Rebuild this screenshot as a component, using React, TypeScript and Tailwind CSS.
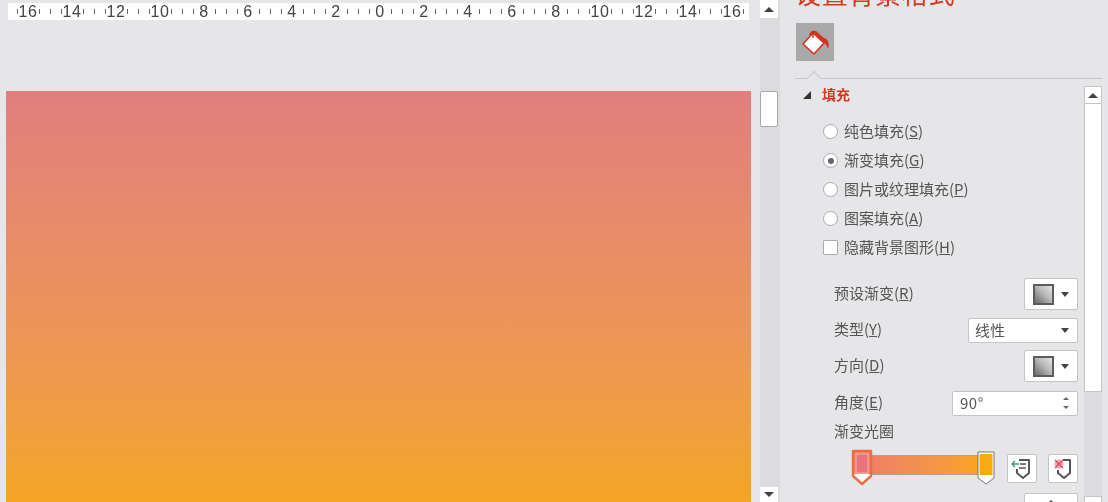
const rulerLabels = [16, 14, 12, 10, 8, 6, 4, 2, 0, 2, 4, 6, 8, 10, 12, 14, 16];

function Tick() {
  return (
    <span className="w-[11px] shrink-0 flex justify-center">
      <span className="w-px h-[5px] bg-[#666]" />
    </span>
  );
}

function Ruler() {
  return (
    <div className="h-[17px] w-[741px] ml-2 mt-[3px] bg-white flex items-center pl-[3.5px] shrink-0">
      <Tick />
      {rulerLabels.map((n, i) => (
        <div key={i} className="flex items-center shrink-0 w-[44px] last:w-[22px]">
          <span className="w-[24px] -mx-[6.5px] shrink-0 flex justify-center text-[16px] leading-none text-[#444] font-['Liberation_Sans',sans-serif] tracking-[0.5px]">
            {n}
          </span>
          <Tick />
          {i < rulerLabels.length - 1 && <Tick />}
          {i < rulerLabels.length - 1 && <Tick />}
        </div>
      ))}
    </div>
  );
}

function ArrowUp() {
  return <div className="w-0 h-0 border-x-[5px] border-x-transparent border-b-[5px] border-b-[#444]" />;
}

function ArrowDown() {
  return <div className="w-0 h-0 border-x-[5px] border-x-transparent border-t-[5px] border-t-[#444]" />;
}

function MainScrollbar() {
  return (
    <div className="w-5 shrink-0 h-full bg-[#dcdcde] flex flex-col justify-between">
      <div className="flex flex-col">
        <div className="w-[18px] h-[18px] bg-white flex items-center justify-center">
          <ArrowUp />
        </div>
        <div className="w-[18px] h-9 mt-[73px] bg-white border border-[#a8a8a8] rounded-[2px]" />
      </div>
      <div className="w-[18px] h-[15px] bg-white flex items-center justify-center">
        <ArrowDown />
      </div>
    </div>
  );
}

function BucketIcon() {
  return (
    <svg width="30" height="30" viewBox="0 0 30 30">
      <path d="M9 8 C10 4 13 3 16 4 L24 11 C28 12 30 16 28 22 C27 18 25 16 22 15 Z" fill="#d5331f" />
      <path d="M13 6 L24 16 L14 27 L3 17 Z" fill="#fff" stroke="#d5331f" strokeWidth="1.6" strokeLinejoin="round" />
      <path d="M13 4 V11" stroke="#b92a18" strokeWidth="1.3" />
    </svg>
  );
}

function OptionText({ label, mark }: { label: string; mark: string }) {
  return (
    <span className="mb-[3px] text-[15px] leading-none text-[#555] whitespace-nowrap">
      {label}(<span className="underline">{mark}</span>)
    </span>
  );
}

function Radio({ label, mark, checked }: { label: string; mark: string; checked?: boolean }) {
  return (
    <div className="h-[29px] flex items-center gap-[6px]">
      <span className="w-[15px] h-[15px] rounded-full bg-white border border-[#a9a9a9] flex items-center justify-center shrink-0">
        {checked && <span className="w-[6px] h-[6px] rounded-full bg-[#666]" />}
      </span>
      <OptionText label={label} mark={mark} />
    </div>
  );
}

function SwatchButton() {
  return (
    <div className="w-[54px] h-[32px] bg-white border border-[#c4c4c4] rounded-[2px] flex items-center justify-center gap-[7px]">
      <span className="w-[21px] h-[21px] border-2 border-[#5c5c5c] bg-gradient-to-tr from-[#6a6a6a] via-[#b4b4b4] to-[#e4e4e4]" />
      <span className="w-0 h-0 border-x-[4px] border-x-transparent border-t-[5px] border-t-[#444]" />
    </div>
  );
}

function FormRow({ children, height }: { children: React.ReactNode; height: string }) {
  return <div className={`${height} flex items-center justify-between`}>{children}</div>;
}

function ActiveStop() {
  return (
    <svg width="22" height="37" viewBox="0 0 22 37" className="shrink-0 z-10 mt-[3px]">
      <path d="M2 2 H20 V27 L11 35 L2 27 Z" fill="#fff" stroke="#ee6b45" strokeWidth="2.4" strokeLinejoin="round" />
      <rect x="3" y="3" width="16" height="22" fill="#ee7f5f" />
      <rect x="5" y="5" width="12" height="19" fill="#e8737c" stroke="#f3b3a6" />
    </svg>
  );
}

function EndStop() {
  return (
    <svg width="18" height="36" viewBox="0 0 18 36" className="shrink-0 z-10 mt-[5px]">
      <path d="M1 1 H17 V27 L9 33 L1 27 Z" fill="#fff" stroke="#777" strokeLinejoin="round" />
      <rect x="2.5" y="3" width="13" height="21" fill="#fba90f" />
    </svg>
  );
}

function StopAddIcon() {
  return (
    <svg width="22" height="24" viewBox="0 0 22 24" fill="none">
      <path d="M8 3 H18 V16 L12 21 L6 16 V12" stroke="#555" strokeWidth="2" strokeLinejoin="round" />
      <path d="M9 7 H15 M8 11 H15" stroke="#555" strokeWidth="1.4" />
      <path d="M1 7 H8 M4 4 L1 7 L4 10" stroke="#46a06a" strokeWidth="1.5" />
    </svg>
  );
}

function StopRemoveIcon() {
  return (
    <svg width="22" height="24" viewBox="0 0 22 24" fill="none">
      <path d="M11 3 H18 V16 L12 21 L6 16 V13" stroke="#555" strokeWidth="2" strokeLinejoin="round" />
      <circle cx="7" cy="7" r="4.5" fill="#f2a7b0" />
      <path d="M3 3 L11 11 M11 3 L3 11" stroke="#e0465c" strokeWidth="1.2" />
    </svg>
  );
}

function GradientStops() {
  return (
    <div className="h-[39px] mt-[5px] flex items-start justify-between">
      <div className="ml-[17px] w-[144px] flex items-start justify-between">
        <ActiveStop />
        <div className="flex-1 h-[20px] mt-[9px] -mx-[3px] bg-gradient-to-r from-[#ef7f66] to-[#f8a51b] border-y border-[#a3a3a3]" />
        <EndStop />
      </div>
      <div className="flex gap-[11px] mt-[8px]">
        <div className="w-[30px] h-[29px] bg-white border border-[#c4c4c4] rounded-[2px] flex items-center justify-center">
          <StopAddIcon />
        </div>
        <div className="w-[30px] h-[29px] bg-white border border-[#c4c4c4] rounded-[2px] flex items-center justify-center">
          <StopRemoveIcon />
        </div>
      </div>
    </div>
  );
}

function FillSection() {
  return (
    <div className="flex-1 min-w-0 pr-[6px]">
      <div className="h-[18px] flex items-center pl-[8px]">
        <span className="w-0 h-0 border-l-[8px] border-l-transparent border-b-[8px] border-b-[#333]" />
        <span className="ml-[11px] mb-[2px] text-[14px] leading-none font-bold text-[#d5391f]">填充</span>
      </div>
      <div className="mt-[13px] pl-[28px]">
        <Radio label="纯色填充" mark="S" />
        <Radio label="渐变填充" mark="G" checked />
        <Radio label="图片或纹理填充" mark="P" />
        <Radio label="图案填充" mark="A" />
        <div className="h-[29px] flex items-center gap-[6px]">
          <span className="w-[15px] h-[15px] bg-white border border-[#a9a9a9] rounded-[1px] shrink-0" />
          <OptionText label="隐藏背景图形" mark="H" />
        </div>
      </div>
      <div className="mt-[16px] pl-[39px] text-[15px] text-[#555]">
        <FormRow height="h-[32px]">
          <OptionText label="预设渐变" mark="R" />
          <SwatchButton />
        </FormRow>
        <FormRow height="h-[40px]">
          <OptionText label="类型" mark="Y" />
          <div className="w-[110px] h-[25px] bg-white border border-[#c4c4c4] rounded-[2px] flex items-center justify-between pl-[6px] pr-[8px]">
            <span className="mb-[2px] leading-none">线性</span>
            <span className="w-0 h-0 border-x-[4px] border-x-transparent border-t-[5px] border-t-[#444]" />
          </div>
        </FormRow>
        <FormRow height="h-[32px]">
          <OptionText label="方向" mark="D" />
          <SwatchButton />
        </FormRow>
        <FormRow height="h-[41px]">
          <OptionText label="角度" mark="E" />
          <div className="w-[126px] h-[25px] mt-[1px] bg-white border border-[#c4c4c4] rounded-[2px] flex items-center justify-between pl-[7px] pr-[8px]">
            <span className="mb-[2px] leading-none tracking-[0.5px]">90°</span>
            <div className="flex flex-col gap-[6px]">
              <span className="w-0 h-0 border-x-[3px] border-x-transparent border-b-[3px] border-b-[#666]" />
              <span className="w-0 h-0 border-x-[3px] border-x-transparent border-t-[3px] border-t-[#666]" />
            </div>
          </div>
        </FormRow>
        <div className="h-[18px] pb-[3px] flex items-center leading-none">渐变光圈</div>
        <GradientStops />
        <div className="h-[20px] mt-[8px] flex justify-end">
          <div className="w-[54px] h-[32px] shrink-0 bg-white border border-[#c4c4c4] rounded-[2px] flex justify-center pt-[6px]">
            <ArrowUp />
          </div>
        </div>
      </div>
    </div>
  );
}

function PanelScrollbar() {
  return (
    <div className="w-[18px] shrink-0 flex flex-col">
      <div className="h-[18px] bg-white border border-[#c4c4c4] rounded-[1px] flex items-center justify-center">
        <ArrowUp />
      </div>
      <div className="h-[288px] bg-white border-x border-b border-[#c4c4c4]" />
      <div className="h-[104px] bg-[#dcdcde]" />
      <div className="h-[10px] bg-white border border-[#c4c4c4]" />
    </div>
  );
}

function FormatPanel() {
  return (
    <div className="flex-1 h-full pl-[15px] pr-[6px] flex flex-col overflow-hidden">
      <h2 className="-mt-[22px] h-[30px] text-[26px] leading-[30px] tracking-[0.7px] text-[#d5391f] whitespace-nowrap shrink-0">
        设置背景格式
      </h2>
      <div className="mt-[15px] w-[38px] h-[38px] ml-px bg-[#a9a9a9] flex items-center justify-center shrink-0">
        <BucketIcon />
      </div>
      <div className="relative mt-[17px] h-px bg-[#c8c8ca] shrink-0">
        <div className="absolute left-[14px] -top-[5px] w-[10px] h-[10px] rotate-45 bg-[#e6e6e8] border-l border-t border-[#c8c8ca]" />
      </div>
      <div className="mt-[7px] flex flex-1">
        <FillSection />
        <PanelScrollbar />
      </div>
    </div>
  );
}

export default function App() {
  return (
    <div className="w-[1108px] h-[502px] bg-[#e6e6e8] flex overflow-hidden blur-[0.4px] font-['Noto_Sans_CJK_SC','Liberation_Sans',sans-serif]">
      <div className="w-[760px] shrink-0 h-full flex flex-col">
        <Ruler />
        <div className="mt-[71px] ml-[6px] w-[745px] flex-1 bg-gradient-to-b from-[#e17e7d] to-[#f4a523]" />
      </div>
      <MainScrollbar />
      <FormatPanel />
    </div>
  );
}
